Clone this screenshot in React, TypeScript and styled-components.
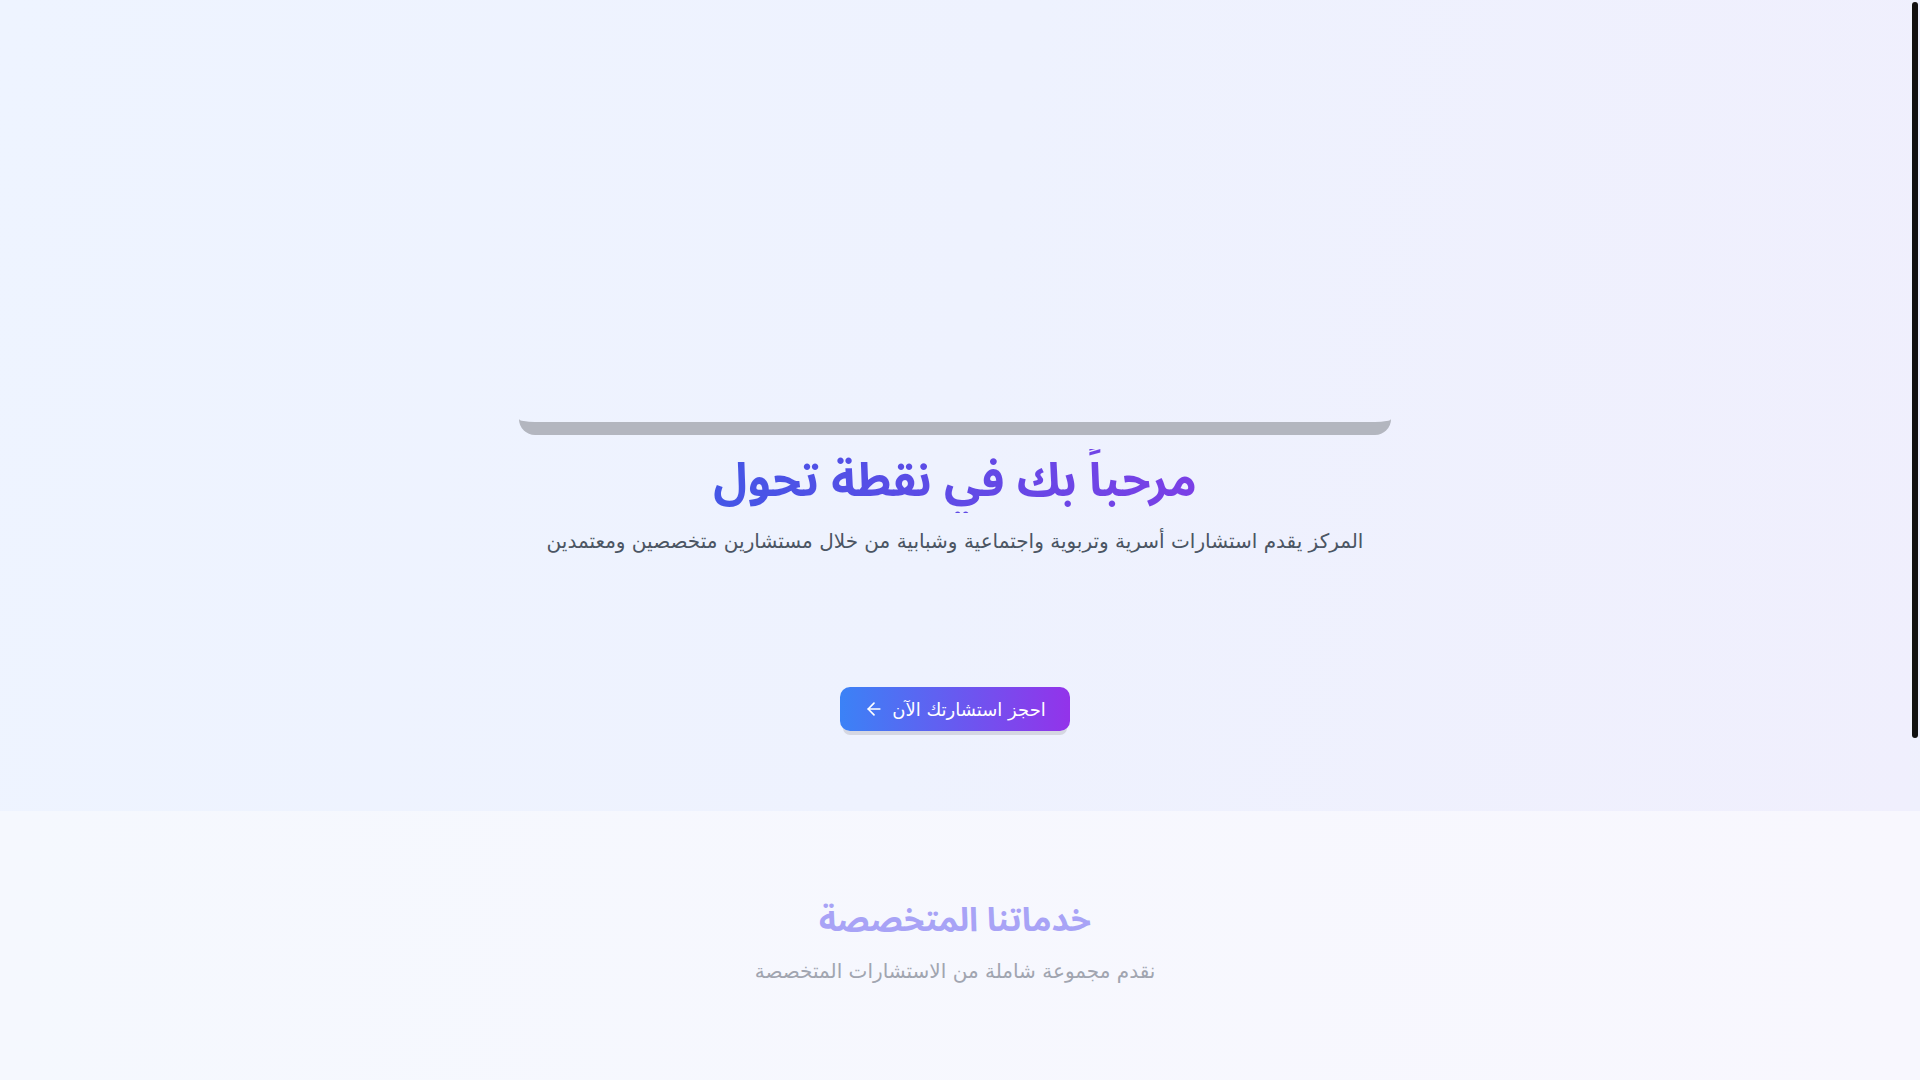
import React from 'react'
import styled, { createGlobalStyle } from 'styled-components'
import { ArrowLeft } from 'lucide-react'

const GlobalStyle = createGlobalStyle`
  html, body {
    margin: 0;
    padding: 0;
    overflow: hidden;
  }
  body {
    font-family: "DejaVu Sans", "Noto Sans", sans-serif;
    background: #f6f7fe;
  }
`

export default function App() {
  return (
    <>
      <GlobalStyle />
      <Shell>
        <Page dir="rtl">
          <Hero>
            <MediaFrame />
            <HeroTitle>مرحباً بك في نقطة تحول</HeroTitle>
            <HeroText>
              المركز يقدم استشارات أسرية وتربوية واجتماعية وشبابية من خلال
              مستشارين متخصصين ومعتمدين
            </HeroText>
            <BookButton>
              احجز استشارتك الآن
              <ArrowLeft size={20} strokeWidth={2} />
            </BookButton>
          </Hero>
          <Services>
            <SectionTitle>خدماتنا المتخصصة</SectionTitle>
            <SectionText>نقدم مجموعة شاملة من الاستشارات المتخصصة</SectionText>
          </Services>
        </Page>
        <ScrollRail>
          <ScrollThumb />
        </ScrollRail>
      </Shell>
    </>
  )
}

const Shell = styled.div`
  display: flex;
  height: 100vh;
  overflow: hidden;
`

const Page = styled.main`
  flex: 1;
  min-width: 0;
`

const ScrollRail = styled.div`
  width: 10px;
  flex-shrink: 0;
  padding: 2px 2px 0;
  box-sizing: border-box;
  background: linear-gradient(180deg, #eef2fe 0, #eff0fd 811px, #f7f7fe 811px);
`

const ScrollThumb = styled.div`
  height: 736px;
  border-radius: 3px;
  background: #111;
`

const Hero = styled.section`
  display: flex;
  flex-direction: column;
  align-items: center;
  height: 811px;
  box-sizing: border-box;
  padding-top: 80px;
  background: linear-gradient(100deg, #eef4ff 0%, #eef2fe 50%, #f0effd 100%);
`

const MediaFrame = styled.div`
  width: 872px;
  height: 355px;
  box-sizing: border-box;
  border-bottom: 13px solid #b3b6bf;
  border-radius: 16px;
`

const HeroTitle = styled.h1`
  margin: 14px 0 0;
  font-family: "Noto Sans Arabic", "DejaVu Sans", sans-serif;
  font-size: 46.5px;
  line-height: 64px;
  font-weight: 700;
  background: linear-gradient(90deg, #4456e6, #7b3fe6);
  -webkit-background-clip: text;
  background-clip: text;
  color: transparent;
`

const HeroText = styled.p`
  margin: 12px 0 0;
  font-size: 20px;
  line-height: 1.6;
  color: #4b5563;
`

const BookButton = styled.button`
  display: flex;
  align-items: center;
  gap: 8px;
  margin-top: 130px;
  height: 44px;
  padding: 0 24px;
  border: none;
  border-radius: 10px;
  font-family: inherit;
  font-size: 18px;
  color: #fff;
  background: linear-gradient(90deg, #3b82f6, #9333ea);
  box-shadow: 0 7px 0 -3px #d5d7e2;
  cursor: pointer;
`

const Services = styled.section`
  display: flex;
  flex-direction: column;
  align-items: center;
  min-height: 770px;
  padding-top: 89px;
  box-sizing: border-box;
  background: linear-gradient(90deg, #f5f8fe, #f8f7fe);
`

const SectionTitle = styled.h2`
  margin: 0;
  font-family: "Noto Sans Arabic", "DejaVu Sans", sans-serif;
  font-size: 33px;
  line-height: 42px;
  font-weight: 700;
  color: #a8a3f6;
`

const SectionText = styled.p`
  margin: 13px 0 0;
  font-size: 20px;
  line-height: 1.6;
  color: #a1a5b0;
`
